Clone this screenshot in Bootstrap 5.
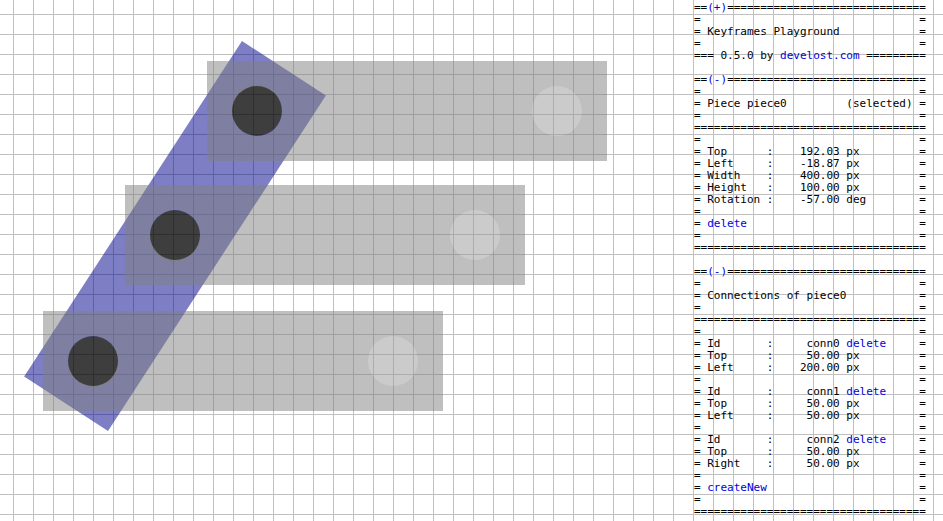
<!DOCTYPE html>
<html lang="en">
<head>
<meta charset="utf-8">
<meta name="viewport" content="width=device-width, initial-scale=1">
<title>Keyframes Playground</title>
<link href="https://cdn.jsdelivr.net/npm/bootstrap@5.3.0/dist/css/bootstrap.min.css" rel="stylesheet">
<style>
  body {
    background-color: #fff;
    background-image:
      linear-gradient(to right, #c0c0c0 1px, transparent 1px),
      linear-gradient(to bottom, #c0c0c0 1px, transparent 1px);
    background-size: 20px 20px;
    background-position: 13px 14px;
  }
  .console {
    width: 249px;
    font-family: "DejaVu Sans Mono", "Lucida Console", monospace;
    font-size: 11px;
    line-height: 12px;
    color: #000;
    padding-top: 2px;
  }
  .console section { margin-bottom: 12px; }
  .console section > div { white-space: pre; }
  .console a { color: #0000dd; }
  .piece { width: 400px; height: 100px; opacity: .5; background: #808080; }
  .piece-selected { left: -25px; top: 186px; background: #00008b; transform: rotate(-57deg); }
  .piece-1 { left: 207px; top: 61px; }
  .piece-2 { left: 125px; top: 185px; }
  .piece-3 { left: 43px; top: 311px; }
  .conn { width: 50px; height: 50px; top: 25px; background: #999; }
  .conn-joined { background: #000; }
  .conn-start { left: 25px; }
  .conn-mid { left: 175px; }
  .conn-end { right: 25px; }
</style>
</head>
<body class="min-vh-100 d-flex overflow-hidden">
<main class="flex-grow-1 position-relative" aria-label="Canvas">
  <div class="piece piece-selected position-absolute">
    <div class="conn conn-joined conn-start position-absolute rounded-circle"></div>
    <div class="conn conn-joined conn-mid position-absolute rounded-circle"></div>
    <div class="conn conn-joined conn-end position-absolute rounded-circle"></div>
  </div>
  <div class="piece piece-1 position-absolute">
    <div class="conn conn-joined conn-start position-absolute rounded-circle"></div>
    <div class="conn conn-end position-absolute rounded-circle"></div>
  </div>
  <div class="piece piece-2 position-absolute">
    <div class="conn conn-joined conn-start position-absolute rounded-circle"></div>
    <div class="conn conn-end position-absolute rounded-circle"></div>
  </div>
  <div class="piece piece-3 position-absolute">
    <div class="conn conn-joined conn-start position-absolute rounded-circle"></div>
    <div class="conn conn-end position-absolute rounded-circle"></div>
  </div>
</main>
<aside class="console flex-shrink-0 position-relative">
<section>
<div>==<a class="text-decoration-none" href="#about">(+)</a>==============================</div>
<div>=                                 =</div>
<div>= Keyframes Playground            =</div>
<div>=                                 =</div>
<div>=== 0.5.0 by <a class="text-decoration-none" href="#develost">develost.com</a> =========</div>
</section>
<section>
<div>==<a class="text-decoration-none" href="#piece">(-)</a>==============================</div>
<div>=                                 =</div>
<div>= Piece piece0         (selected) =</div>
<div>=                                 =</div>
<div>===================================</div>
<div>=                                 =</div>
<div>= Top      :    192.03 px         =</div>
<div>= Left     :    -18.87 px         =</div>
<div>= Width    :    400.00 px         =</div>
<div>= Height   :    100.00 px         =</div>
<div>= Rotation :    -57.00 deg        =</div>
<div>=                                 =</div>
<div>= <a class="text-decoration-none" href="#delete">delete</a>                          =</div>
<div>=                                 =</div>
<div>===================================</div>
</section>
<section class="mb-0">
<div>==<a class="text-decoration-none" href="#connections">(-)</a>==============================</div>
<div>=                                 =</div>
<div>= Connections of piece0           =</div>
<div>=                                 =</div>
<div>===================================</div>
<div>=                                 =</div>
<div>= Id       :     conn0 <a class="text-decoration-none" href="#conn0">delete</a>     =</div>
<div>= Top      :     50.00 px         =</div>
<div>= Left     :    200.00 px         =</div>
<div>=                                 =</div>
<div>= Id       :     conn1 <a class="text-decoration-none" href="#conn1">delete</a>     =</div>
<div>= Top      :     50.00 px         =</div>
<div>= Left     :     50.00 px         =</div>
<div>=                                 =</div>
<div>= Id       :     conn2 <a class="text-decoration-none" href="#conn2">delete</a>     =</div>
<div>= Top      :     50.00 px         =</div>
<div>= Right    :     50.00 px         =</div>
<div>=                                 =</div>
<div>= <a class="text-decoration-none" href="#create">createNew</a>                       =</div>
<div>=                                 =</div>
<div>===================================</div>
</section>
</aside>
<script src="https://cdn.jsdelivr.net/npm/bootstrap@5.3.0/dist/js/bootstrap.bundle.min.js"></script>
</body>
</html>
